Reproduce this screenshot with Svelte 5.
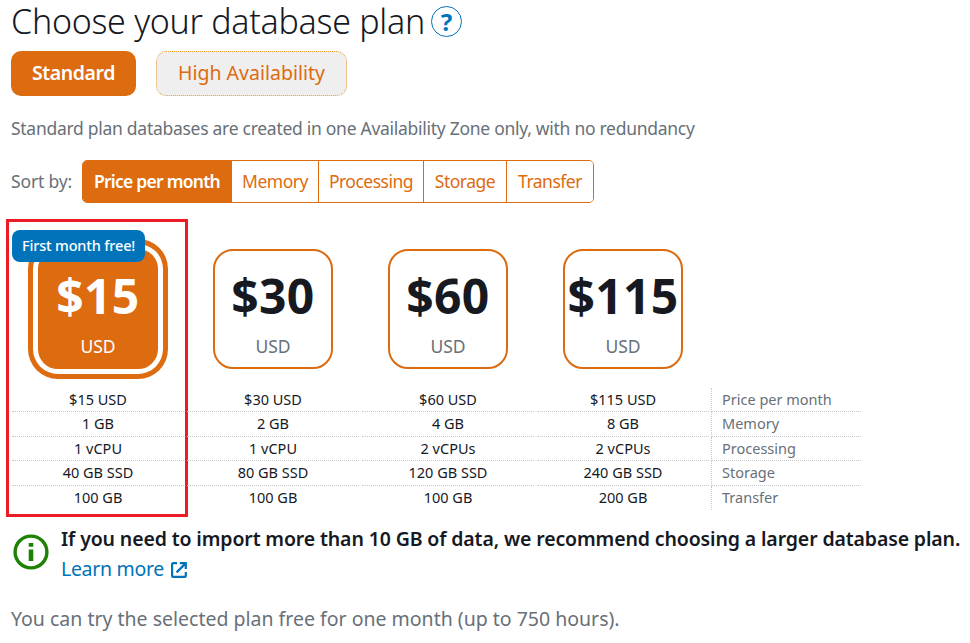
<script>
  const tiers = ['Standard', 'High Availability']
  const sorts = ['Price per month', 'Memory', 'Processing', 'Storage', 'Transfer']
  const plans = [
    { price: 15, memory: '1 GB', cpu: '1 vCPU', storage: '40 GB SSD', transfer: '100 GB', badge: 'First month free!' },
    { price: 30, memory: '2 GB', cpu: '1 vCPU', storage: '80 GB SSD', transfer: '100 GB' },
    { price: 60, memory: '4 GB', cpu: '2 vCPUs', storage: '120 GB SSD', transfer: '100 GB' },
    { price: 115, memory: '8 GB', cpu: '2 vCPUs', storage: '240 GB SSD', transfer: '200 GB' }
  ]

  let tier = $state('Standard')
  let sortBy = $state('Price per month')
  let selected = $state(15)

  function specs(plan) {
    return [`$${plan.price} USD`, plan.memory, plan.cpu, plan.storage, plan.transfer]
  }
</script>

<main>
  <header>
    <h1>Choose your database plan</h1>
    <button class="help" type="button" aria-label="Help">?</button>
  </header>

  <div class="tiers">
    {#each tiers as name}
      <button class="tier" class:active={tier === name} type="button" onclick={() => (tier = name)}>{name}</button>
    {/each}
  </div>

  <p class="hint">Standard plan databases are created in one Availability Zone only, with no redundancy</p>

  <div class="sort">
    <span class="sort-label">Sort by:</span>
    <div class="segments">
      {#each sorts as name}
        <button class="segment" class:active={sortBy === name} type="button" onclick={() => (sortBy = name)}>{name}</button>
      {/each}
    </div>
  </div>

  <section class="plans">
    {#each plans as plan}
      <div class="plan" class:selected={selected === plan.price}>
        {#if plan.badge}
          <span class="badge">{plan.badge}</span>
        {/if}
        <button class="card" type="button" onclick={() => (selected = plan.price)}>
          <strong>${plan.price}</strong>
          <span>USD</span>
        </button>
        <ul>
          {#each specs(plan) as value}
            <li>{value}</li>
          {/each}
        </ul>
      </div>
    {/each}
    <ul class="legend">
      {#each sorts as name}
        <li>{name}</li>
      {/each}
    </ul>
  </section>

  <div class="notice">
    <svg class="info" width="36" height="36" viewBox="0 0 36 36" aria-hidden="true">
      <circle cx="18" cy="18" r="15.9" fill="none" stroke="#1d8102" stroke-width="3.4" />
      <path d="M15.7 9h4.6v3.8h-4.6zM15.7 15.4h4.6v11.6h-4.6z" fill="#1d8102" />
    </svg>
    <div>
      <p class="notice-title">If you need to import more than 10 GB of data, we recommend choosing a larger database plan.</p>
      <a href="#learn-more">
        <span>Learn more</span>
        <svg width="16" height="16" viewBox="0 0 16 16" fill="none" stroke="currentColor" stroke-width="2.2" aria-hidden="true"><path d="M6 1.2H2.1a1 1 0 0 0-1 1v11.7a1 1 0 0 0 1 1h11.7a1 1 0 0 0 1-1V10" /><path d="M8.8 1.1h6v6M14.6 1.4L5.6 10.4" /></svg>
      </a>
    </div>
  </div>

  <p class="trial">You can try the selected plan free for one month (up to 750 hours).</p>
</main>

<style>
  :global(body) {
    margin: 0;
    background: #fff;
    overflow: hidden;
  }

  main {
    box-sizing: border-box;
    height: 643px;
    padding-left: 11px;
    font-family: 'Noto Sans', 'Open Sans', sans-serif;
    color: #16191f;
    white-space: nowrap;
  }

  h1,
  p,
  ul {
    margin: 0;
    padding: 0;
    list-style: none;
  }

  button {
    box-sizing: border-box;
    padding: 0;
    font-family: inherit;
    cursor: pointer;
  }

  header {
    display: flex;
    align-items: center;
    height: 42px;
    gap: 5px;
  }

  h1 {
    width: 415px;
    font-size: 34px;
    font-weight: 300;
    line-height: 42px;
    letter-spacing: -0.28px;
  }

  .help {
    width: 31px;
    height: 31px;
    border: 1px solid #0073bb;
    border-radius: 50%;
    background: #fff;
    color: #0073bb;
    font-size: 24px;
    font-weight: 700;
    line-height: 27px;
  }

  .tiers {
    display: flex;
    gap: 20px;
    margin-top: 9px;
  }

  .tier {
    width: 191px;
    height: 45px;
    padding-bottom: 2px;
    border: 1px dotted #ec9a2c;
    border-radius: 10px;
    background: #efefef;
    color: #dd6b10;
    font-size: 19.5px;
  }

  .tier.active {
    width: 125px;
    border: none;
    background: #dd6b10;
    color: #fff;
    font-weight: 600;
    letter-spacing: -0.4px;
  }

  .hint {
    margin-top: 20px;
    color: #687078;
    font-size: 17.5px;
    line-height: 24px;
    letter-spacing: -0.28px;
  }

  .sort {
    display: flex;
    align-items: center;
    height: 43px;
    margin-top: 20px;
    font-size: 17.5px;
    letter-spacing: -0.15px;
  }

  .sort-label {
    width: 71px;
    padding-bottom: 2px;
    color: #687078;
  }

  .segments {
    display: grid;
    grid-template-columns: 149px 87px 105px 83px 86px;
    box-sizing: border-box;
    width: 512px;
    height: 43px;
    border: 1px solid #dd6b10;
    border-radius: 5px;
    overflow: hidden;
  }

  .segment {
    padding-bottom: 2px;
    border: none;
    border-right: 1px solid #dd6b10;
    background: #fff;
    color: #dd6b10;
    font-size: 17.5px;
    letter-spacing: -0.5px;
  }

  .segment:last-child {
    border-right: none;
  }

  .segment.active {
    background: #dd6b10;
    color: #fff;
    font-weight: 600;
    letter-spacing: -0.75px;
  }

  .plans {
    display: flex;
    height: 263px;
    margin-top: 46px;
  }

  .plan {
    position: relative;
    display: flex;
    flex-direction: column;
    align-items: center;
    width: 174px;
    margin-right: 1px;
  }

  .plan.selected::after {
    content: '';
    position: absolute;
    inset: -30px -3px auto -5px;
    height: 292px;
    border: 3px solid #ed1c24;
    pointer-events: none;
  }

  .card {
    display: flex;
    flex-direction: column;
    align-items: center;
    width: 120px;
    height: 120px;
    border: 2px solid #dd6b10;
    border-radius: 20px;
    background: #fff;
    color: #16191f;
  }

  .card strong {
    height: 82px;
    padding-top: 12px;
    box-sizing: border-box;
    font-size: 48px;
    font-weight: 700;
    line-height: 66px;
    letter-spacing: 0.3px;
  }

  .card span {
    color: #687078;
    font-size: 17.5px;
    line-height: 26px;
  }

  .selected .card {
    background: #dd6b10;
    color: #fff;
    box-shadow: 0 0 0 5px #fff, 0 0 0 10px #dd6b10;
  }

  .selected .card span {
    color: #fff;
  }

  .badge {
    position: absolute;
    top: -19px;
    left: 1px;
    z-index: 1;
    box-sizing: border-box;
    width: 133px;
    height: 32px;
    border-radius: 8px;
    background: #0073bb;
    color: #fff;
    font-size: 14.5px;
    font-weight: 500;
    line-height: 30px;
    letter-spacing: -0.15px;
    text-align: center;
  }

  .plans ul {
    width: 172px;
    margin-top: 18.5px;
  }

  .plans li {
    box-sizing: border-box;
    height: 24.5px;
    border-bottom: 1px dotted #c4cbcd;
    font-size: 14.5px;
    line-height: 23px;
    text-align: center;
  }

  .plans li:last-child {
    border-bottom: none;
  }

  .plans .legend {
    width: 150px;
    margin-top: 138.5px;
  }

  .legend li {
    padding-left: 10px;
    border-left: 1px dotted #c4cbcd;
    color: #687078;
    text-align: left;
  }

  .notice {
    display: flex;
    gap: 12px;
    padding-left: 2px;
    margin-top: 13px;
  }

  .info {
    flex: none;
    margin-top: 9px;
  }

  .notice-title {
    font-size: 19.5px;
    font-weight: 600;
    line-height: 28px;
    letter-spacing: -0.13px;
  }

  a {
    display: flex;
    align-items: center;
    gap: 7px;
    height: 31px;
    color: #0073bb;
    font-size: 19.5px;
    letter-spacing: -0.3px;
    text-decoration: none;
  }

  a svg {
    margin-top: 2px;
  }

  .trial {
    margin-top: 21px;
    color: #687078;
    font-size: 19.5px;
    line-height: 28px;
  }
</style>
